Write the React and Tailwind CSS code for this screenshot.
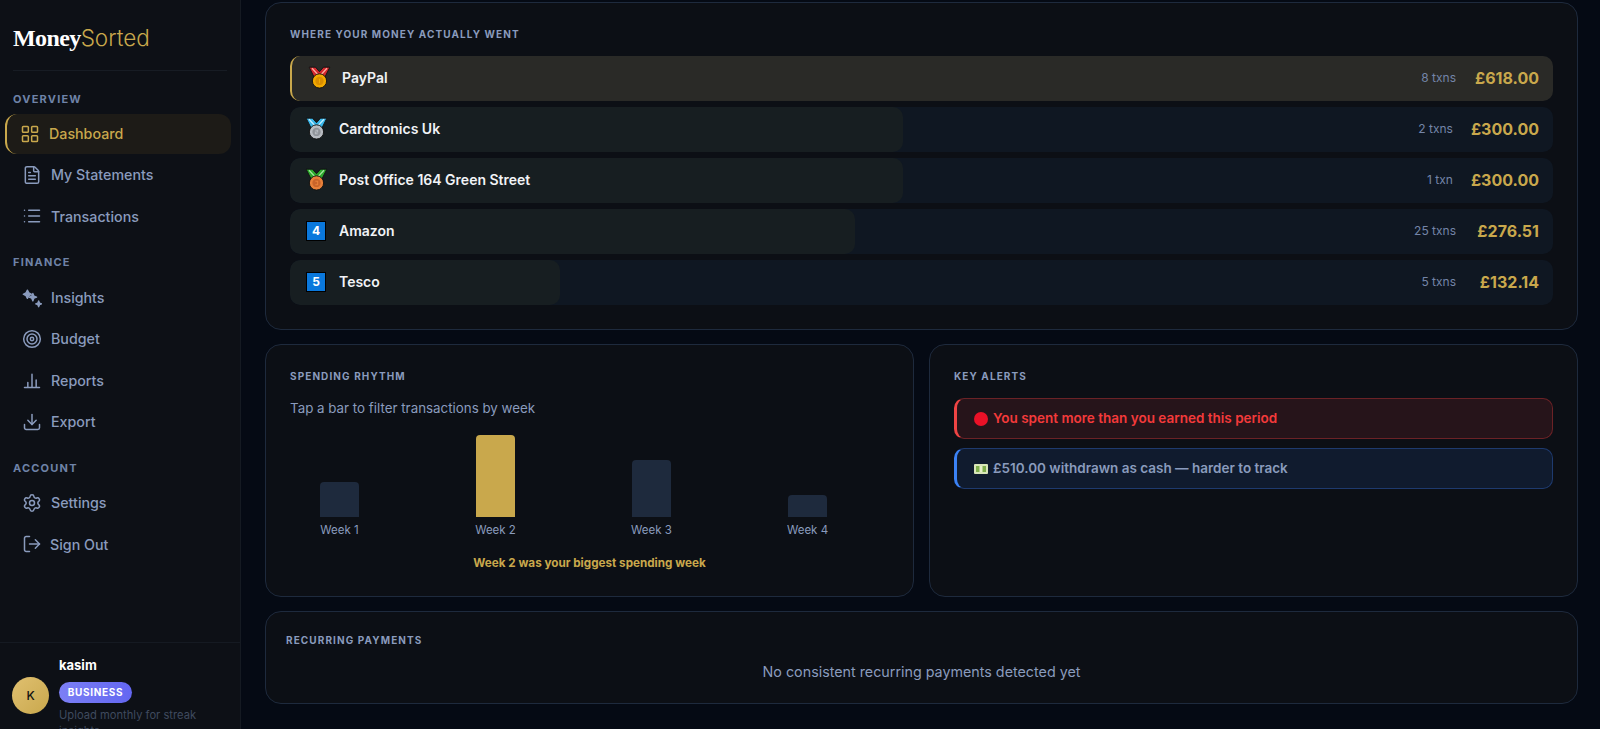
import React from "react";
import { LayoutGrid, FileText, List, Target, Settings, Download, LogOut } from "lucide-react";

const Sparks = ({ className }) => (
  <svg viewBox="0 0 24 24" className={className} fill="currentColor" stroke="currentColor" strokeWidth="1.6" strokeLinejoin="round">
    <path d="M6.500 2.500l1.700 3.300 3.300 1.700-3.300 1.700-1.700 3.300-1.700-3.300L1.500 7.500l3.300-1.700z" />
    <path d="M13 6.500l1.300 3.200 3.200 1.300-3.200 1.300-1.300 3.200-1.300-3.200L8.500 11l3.200-1.300z" />
    <path d="M20 15.500l1 2.500 2.500 1-2.500 1-1 2.500-1-2.500-2.500-1 2.500-1z" />
  </svg>
);

const Bars = ({ className }) => (
  <svg viewBox="0 0 24 24" className={className} fill="none" stroke="currentColor" strokeWidth="1.8" strokeLinecap="round">
    <path d="M3 21h18M7 21v-6M12 21V5M17 21v-9" />
  </svg>
);

const Medal = ({ ribbon, ribbonDark, disc, rim, n }) => (
  <svg viewBox="0 0 20 20" className="w-[23px] h-[23px] shrink-0">
    <path d="M1 1h5.500L10 5l3.500-4H19l-4.500 9h-9z" fill={ribbon} stroke="#111" strokeWidth="0.8" />
    <path d="M3.500 2l6.500 7 6.500-7" fill="none" stroke={ribbonDark} strokeWidth="1.100" />
    <circle cx="10" cy="13" r="6.200" fill={disc} stroke="#111" strokeWidth="0.8" />
    <circle cx="10" cy="13" r="3.600" fill={rim} />
    <path d={n} fill="none" stroke={disc} strokeWidth="0.9" />
  </svg>
);

const Keycap = ({ children }) => (
  <span className="w-[20px] h-[20px] bg-[#0a78dc] border border-black text-white text-[12px] font-bold flex items-center justify-center shrink-0">
    {children}
  </span>
);

const Cash = () => (
  <svg viewBox="0 0 14 10" className="w-[14px] h-[10px] shrink-0">
    <rect width="14" height="10" rx="1" fill="#d8e6b8" />
    <rect x="2" y="2" width="10" height="6" fill="#7fae4c" />
    <rect x="5.500" y="2" width="3" height="6" fill="#e6efc8" />
  </svg>
);

const NavItem = ({ icon: Icon, label, active, gap = "gap-[9px]" }) =>
  active ? (
    <div className="h-[40px] ml-[5px] mr-[9px] rounded-[12px] border-l-2 border-[#c9a84c] bg-[#1d1b17] flex items-center pl-[13px] gap-[9px] text-[#c9a84c] text-[14.25px] font-medium">
      <Icon className="w-[20px] h-[20px]" strokeWidth={1.8} />
      {label}
    </div>
  ) : (
    <div className={`h-[41.3px] pt-[1px] flex items-center pl-[22px] ${gap} text-[#8a9bbd] text-[14.25px] font-medium`}>
      <Icon className="w-[20px] h-[20px] shrink-0" strokeWidth={1.8} />
      {label}
    </div>
  );

const SectionLabel = ({ children, className }) => (
  <div className={`text-[11px] leading-[14px] font-bold tracking-[1.2px] text-[#6f83a8] pl-[13px] ${className}`}>{children}</div>
);

const CardTitle = ({ children }) => (
  <h3 className="text-[10px] font-bold tracking-[1.1px] text-[#8a9bbd] uppercase">{children}</h3>
);

const merchants = [
  { name: "PayPal", txns: "8 txns", amount: "£618.00", width: "100%", top: true },
  { name: "Cardtronics Uk", txns: "2 txns", amount: "£300.00", width: "48.5%" },
  { name: "Post Office 164 Green Street", txns: "1 txn", amount: "£300.00", width: "48.5%" },
  { name: "Amazon", txns: "25 txns", amount: "£276.51", width: "44.7%" },
  { name: "Tesco", txns: "5 txns", amount: "£132.14", width: "21.4%" },
];

const medals = [
  <Medal ribbon="#d6282e" ribbonDark="#ffb0a0" disc="#f2a900" rim="#d98e00" n="M10 11v4" />,
  <Medal ribbon="#38b6ea" ribbonDark="#c6efff" disc="#b8bcc2" rim="#8f9399" n="M9 11.500h2v1.500H9v1.500h2" />,
  <Medal ribbon="#2ca82c" ribbonDark="#a6e8a0" disc="#e8803a" rim="#c9642a" n="M9 11.500h2v3H9" />,
  <Keycap>4</Keycap>,
  <Keycap>5</Keycap>,
];

const weeks = [
  { label: "Week 1", height: "h-[35px]" },
  { label: "Week 2", height: "h-[82px]", peak: true },
  { label: "Week 3", height: "h-[57px]" },
  { label: "Week 4", height: "h-[22px]" },
];

const Card = ({ className, children }) => (
  <section className={`bg-[#0c0f15] border border-[#1e2a3d] rounded-[16px] ${className}`}>{children}</section>
);

export default function App() {
  return (
    <div className="h-[729px] overflow-hidden flex bg-[#050a14] font-['Inter',sans-serif]">
      <aside className="w-[241px] shrink-0 h-full bg-[#0d1016] border-r border-[#151a22] flex flex-col overflow-hidden">
        <div className="h-[71px] mx-[13px] border-b border-[#171c24] flex items-center pt-[5px]">
          <span className="font-['Liberation_Serif',serif] font-bold text-[24px] text-white tracking-[-0.6px]">Money</span>
          <span className="font-light text-[22.5px] text-[#c9a84c]">Sorted</span>
        </div>
        <SectionLabel className="mt-[21px] mb-[8px]">OVERVIEW</SectionLabel>
        <NavItem icon={LayoutGrid} label="Dashboard" active />
        <NavItem icon={FileText} label="My Statements" />
        <NavItem icon={List} label="Transactions" />
        <SectionLabel className="mt-[18px] mb-[8px]">FINANCE</SectionLabel>
        <NavItem icon={Sparks} label="Insights" />
        <NavItem icon={Target} label="Budget" />
        <NavItem icon={Bars} label="Reports" />
        <NavItem icon={Download} label="Export" />
        <SectionLabel className="mt-[19px] mb-[7px]">ACCOUNT</SectionLabel>
        <NavItem icon={Settings} label="Settings" />
        <NavItem icon={LogOut} label="Sign Out" gap="gap-[8px]" />
        <div className="mt-auto h-[87px] shrink-0 border-t border-[#151a22] pl-[12px] flex gap-[10px]">
          <div className="w-[37px] h-[37px] mt-[34px] rounded-full bg-gradient-to-br from-[#e0c070] to-[#c9a84c] text-[#111] text-[12px] font-medium flex items-center justify-center shrink-0">
            K
          </div>
          <div className="pt-[14px]">
            <div className="text-[13px] font-bold text-white leading-[16px]">kasim</div>
            <div className="mt-[9px] w-[73px] h-[21px] rounded-full bg-gradient-to-r from-[#7c7ff5] to-[#6366f1] text-white text-[10px] font-bold tracking-[0.7px] flex items-center justify-center">
              BUSINESS
            </div>
            <div className="mt-[4px] text-[11.2px] leading-[16px] text-[#3f4a5e] w-[150px]">Upload monthly for streak insights</div>
          </div>
        </div>
      </aside>

      <main className="flex-1 min-w-0 pl-[24px] pr-[22px] pt-[2px] flex flex-col gap-[14px]">
        <Card className="h-[328px] px-[24px] pt-[24px]">
          <CardTitle>Where your money actually went</CardTitle>
          <div className="mt-[14px] flex flex-col gap-[6px]">
            {merchants.map((m, i) => (
              <div
                key={m.name}
                className={`relative h-[45px] pb-[2px] rounded-[10px] overflow-hidden flex items-center pr-[14px] ${
                  m.top ? "bg-[#2a2a27] border-l-2 border-[#c9a84c] pl-[17px]" : "bg-[#0f1722] pl-[16px]"
                }`}
              >
                {!m.top && (
                  <div className="absolute left-0 top-0 bottom-0 rounded-[10px] bg-[#171e21]" style={{ width: m.width }} />
                )}
                <div className="relative w-[20px] flex justify-center">{medals[i]}</div>
                <span className="relative ml-[13px] text-[14px] font-semibold text-[#f1f3f6]">{m.name}</span>
                <span className="relative ml-auto text-[12px] text-[#7485a8]">{m.txns}</span>
                <span className="relative ml-[18px] min-w-[65px] text-right text-[16px] font-bold text-[#c9a84c]">{m.amount}</span>
              </div>
            ))}
          </div>
        </Card>

        <div className="grid grid-cols-2 gap-[15px]">
          <Card className="h-[253px] px-[24px] pt-[24px]">
            <CardTitle>Spending rhythm</CardTitle>
            <p className="mt-[14px] text-[13.35px] text-[#8a9bbd]">Tap a bar to filter transactions by week</p>
            <div className="mt-[15px] h-[104px] pl-[30px] flex items-end gap-[117px]">
              {weeks.map((w) => (
                <div key={w.label} className="w-[39px] flex flex-col items-center justify-end">
                  <div className={`w-[39px] rounded-t-[4px] ${w.height} ${w.peak ? "bg-[#c9a84c]" : "bg-[#1e2a3d]"}`} />
                  <span className="mt-[6px] text-[11.5px] leading-[14px] whitespace-nowrap text-[#8a9bbd]">{w.label}</span>
                </div>
              ))}
            </div>
            <p className="mt-[18px] text-center text-[11.7px] font-bold text-[#c9a84c]">Week 2 was your biggest spending week</p>
          </Card>

          <Card className="h-[253px] px-[24px] pt-[24px]">
            <CardTitle>Key Alerts</CardTitle>
            <div className="mt-[14px] flex flex-col gap-[9px]">
              <div className="h-[41px] rounded-[10px] border border-[#6b2226] border-l-[3px] border-l-[#ef4444] bg-[#26141a] flex items-center pl-[17px] gap-[5px] text-[13.5px] font-semibold text-[#f43a3a]">
                <span className="w-[14px] h-[14px] rounded-full bg-[#ea1127] shrink-0" />
                You spent more than you earned this period
              </div>
              <div className="h-[41px] rounded-[10px] border border-[#1e3a6e] border-l-[3px] border-l-[#3b82f6] bg-[#101b2e] flex items-center pl-[17px] gap-[5px] text-[13.5px] font-semibold text-[#8a9bbd]">
                <Cash />
                £510.00 withdrawn as cash — harder to track
              </div>
            </div>
          </Card>
        </div>

        <Card className="h-[93px] px-[20px] pt-[21px]">
          <CardTitle>Recurring payments</CardTitle>
          <p className="mt-[13px] text-center text-[14.3px] text-[#8a9bbd]">No consistent recurring payments detected yet</p>
        </Card>
      </main>
    </div>
  );
}
